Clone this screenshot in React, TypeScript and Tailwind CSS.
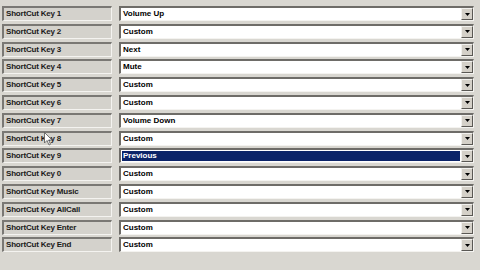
import React from "react";

const rows: [string, string][] = [
  ["ShortCut Key 1", "Volume Up"],
  ["ShortCut Key 2", "Custom"],
  ["ShortCut Key 3", "Next"],
  ["ShortCut Key 4", "Mute"],
  ["ShortCut Key 5", "Custom"],
  ["ShortCut Key 6", "Custom"],
  ["ShortCut Key 7", "Volume Down"],
  ["ShortCut Key 8", "Custom"],
  ["ShortCut Key 9", "Previous"],
  ["ShortCut Key 0", "Custom"],
  ["ShortCut Key Music", "Custom"],
  ["ShortCut Key AllCall", "Custom"],
  ["ShortCut Key Enter", "Custom"],
  ["ShortCut Key End", "Custom"],
];

export default function App() {
  return (
    <div
      className="relative w-[480px] h-[270px] bg-[#d9d7d1] overflow-hidden text-[8px] text-black font-bold"
      style={{ fontFamily: '"Liberation Sans", Arial, sans-serif' }}
    >
      <div className="pt-[6px] grid grid-rows-[repeat(14,17.8px)]">
        {rows.map(([label, value], i) => {
          const sel = value === "Previous";
          return (
            <div key={i} className="flex items-start">
              <div className="ml-[2px] w-[110px] h-[15px] border-t-2 border-l-2 border-[#7a7874] border-b border-r border-b-[#f4f3f0] border-r-[#f4f3f0] bg-[#d4d2cc] flex items-center pl-[2px] leading-none text-[#1a1a1a]">
                <span className="tracking-[-0.2px]">{label}</span>
              </div>
              <div className="ml-[7px] w-[355px] h-[15px] border-t-2 border-l-2 border-[#6e6c68] border-b border-r border-b-[#f4f3f0] border-r-[#f4f3f0] bg-white flex items-stretch">
                <div className="flex-1 flex items-center p-[1px]">
                  <div
                    className={
                      "h-full w-full flex items-center pl-[1px] leading-none " +
                      (sel ? "bg-[#0b2468] text-white" : "")
                    }
                  >
                    {value}
                  </div>
                </div>
                <div className="w-[12px] bg-[#d4d0c8] border-t border-l border-[#f2f1ee] border-b border-r border-b-[#5a5854] border-r-[#5a5854] flex items-center justify-center">
                  <svg width="5" height="3" viewBox="0 0 5 3">
                    <polygon points="0,0 5,0 2.5,3" fill="#000" />
                  </svg>
                </div>
              </div>
            </div>
          );
        })}
      </div>
      <svg
        className="absolute left-[44px] top-[132px]"
        width="9"
        height="14"
        viewBox="0 0 9 14"
      >
        <polygon
          points="0.5,0.5 0.5,11 3,8.5 5,13 6.5,12.3 4.6,8 8,8"
          fill="#ffffff"
          stroke="#555"
          strokeWidth="0.8"
        />
      </svg>
    </div>
  );
}
